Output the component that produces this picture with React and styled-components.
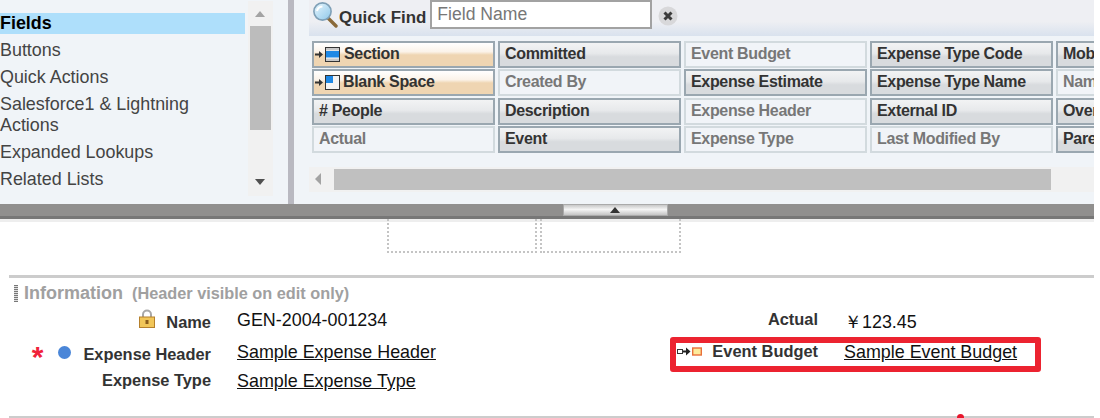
import React from "react";
import styled, { createGlobalStyle } from "styled-components";

const GlobalStyle = createGlobalStyle`
  html, body {
    margin: 0;
    padding: 0;
    background: #fff;
  }
  body {
    width: 1100px;
    height: 418px;
    overflow: hidden;
    font-family: "Liberation Sans", Arial, sans-serif;
  }
`;

const FIELDS = [
  { label: "Section", tone: "tool", icon: "section" },
  { label: "Committed" },
  { label: "Event Budget", used: true },
  { label: "Expense Type Code" },
  { label: "Mobile" },
  { label: "Blank Space", tone: "tool", icon: "blank" },
  { label: "Created By", used: true },
  { label: "Expense Estimate" },
  { label: "Expense Type Name" },
  { label: "Name", used: true },
  { label: "# People" },
  { label: "Description" },
  { label: "Expense Header", used: true },
  { label: "External ID" },
  { label: "Overdue" },
  { label: "Actual", used: true },
  { label: "Event" },
  { label: "Expense Type", used: true },
  { label: "Last Modified By", used: true },
  { label: "Parent" },
];

function MagnifierIcon() {
  return (
    <MagnifierSvg width="25" height="26" viewBox="0 0 25 26">
      <defs>
        <linearGradient id="lens" x1="0" y1="0" x2="1" y2="1">
          <stop offset="0" stopColor="#e8f6fd" />
          <stop offset="1" stopColor="#8ec8ea" />
        </linearGradient>
      </defs>
      <path d="M15 16l8 8" stroke="#8a6a3a" strokeWidth="3.4" strokeLinecap="round" />
      <circle cx="9.5" cy="9.5" r="8.6" fill="url(#lens)" stroke="#7e9fb6" strokeWidth="1.6" />
      <path d="M4 9c.6-2.8 2.6-4.4 5.4-4.6" stroke="#fff" strokeWidth="2" fill="none" />
    </MagnifierSvg>
  );
}

function ClearIcon() {
  return (
    <ClearSvg width="20" height="20" viewBox="0 0 20 20">
      <circle cx="10" cy="10" r="9.5" fill="#d8d8da" />
      <path d="M6.5 6.5l7 7M13.5 6.5l-7 7" stroke="#3c3c3c" strokeWidth="3" />
    </ClearSvg>
  );
}

function ToolArrow() {
  return (
    <svg width="9" height="9" viewBox="0 0 9 9">
      <path d="M0 3.5h4V1l4 3.5L4 8V5.5H0z" fill="#333" />
    </svg>
  );
}

function SectionIcon() {
  return (
    <svg width="15" height="15" viewBox="0 0 15 15">
      <rect x="0.5" y="0.5" width="14" height="14" fill="#fff" stroke="#333" />
      <rect x="1" y="1" width="13" height="2.5" fill="#c8c8c8" />
      <rect x="1" y="4" width="13" height="6.5" fill="#1e88e5" />
      <rect x="1" y="11.5" width="13" height="2.5" fill="#c8c8c8" />
    </svg>
  );
}

function BlankIcon() {
  return (
    <svg width="15" height="15" viewBox="0 0 15 15">
      <rect x="0.5" y="0.5" width="14" height="14" fill="#f4f4f4" stroke="#333" />
      <rect x="1" y="1" width="7" height="7" fill="#1e88e5" />
    </svg>
  );
}

function LockIcon() {
  return (
    <svg width="16" height="19" viewBox="0 0 16 19">
      <path d="M4 9V5.5a4 4 0 0 1 8 0V9" fill="none" stroke="#a8a8a8" strokeWidth="2" />
      <rect x="0.5" y="8" width="15" height="10.5" fill="#f1c659" stroke="#b5802c" />
      <rect x="6.5" y="11" width="3" height="4" fill="#8a5c1a" />
    </svg>
  );
}

function FieldMoveIcon() {
  return (
    <svg width="25" height="9" viewBox="0 0 25 9">
      <rect x="0.5" y="2.5" width="5" height="4" fill="#fff" stroke="#333" />
      <path d="M6 3.6h3V0.5l4.5 4-4.5 4V5.4H6z" fill="#222" />
      <rect x="15.7" y="1" width="8.6" height="7" fill="#fdeb9c" stroke="#e8703a" strokeWidth="1.4" />
    </svg>
  );
}

function App() {
  return (
    <>
      <GlobalStyle />
      <Page>
        <Palette>
          <ListPanel>
            <SideList>
              <SideItem $active>Fields</SideItem>
              <SideItem>Buttons</SideItem>
              <SideItem>Quick Actions</SideItem>
              <SideItem>Salesforce1 &amp; Lightning Actions</SideItem>
              <SideItem>Expanded Lookups</SideItem>
              <SideItem>Related Lists</SideItem>
            </SideList>
            <VScroll>
              <ScrollArrow $dir="up" />
              <VThumb />
              <ScrollArrow $dir="down" />
            </VScroll>
          </ListPanel>
          <PanelDivider />
          <FieldsPanel>
            <QuickFind>
              <MagnifierIcon />
              <QuickLabel>Quick Find</QuickLabel>
              <QuickInput placeholder="Field Name" readOnly />
              <ClearIcon />
            </QuickFind>
            <FieldGrid>
              {FIELDS.map((f) => (
                <FieldChip key={f.label} $tone={f.tone} $used={f.used}>
                  {f.icon && (
                    <ChipIcons $blank={f.icon === "blank"}>
                      <ToolArrow />
                      {f.icon === "section" ? <SectionIcon /> : <BlankIcon />}
                    </ChipIcons>
                  )}
                  {f.label}
                </FieldChip>
              ))}
            </FieldGrid>
            <HScroll>
              <ScrollArrow $dir="left" />
              <HThumb />
            </HScroll>
          </FieldsPanel>
        </Palette>
        <Splitter>
          <SplitHandle />
        </Splitter>
        <Canvas>
          <DropRow>
            <DropBox $width={150} />
            <DropBox $width={141} />
          </DropRow>
          <Section>
            <SectionHead>
              <Grip />
              <SectionTitle>Information</SectionTitle>
              <SectionNote>(Header visible on edit only)</SectionNote>
            </SectionHead>
            <Columns>
              <FormColumn $width={460}>
                <FormRow $height={32} $label={202}>
                  <FormLabel $top={5}>
                    <LockSlot><LockIcon /></LockSlot>
                    Name
                  </FormLabel>
                  <FormValue $top={3}>GEN-2004-001234</FormValue>
                </FormRow>
                <FormRow $height={29} $label={202}>
                  <FormLabel $top={5}>
                    <Required>*</Required>
                    <BlueDot />
                    Expense Header
                  </FormLabel>
                  <FormLink $top={3}>Sample Expense Header</FormLink>
                </FormRow>
                <FormRow $height={29} $label={202}>
                  <FormLabel $top={2}>Expense Type</FormLabel>
                  <FormLink $top={3}>Sample Expense Type</FormLink>
                </FormRow>
              </FormColumn>
              <FormColumn $width={616}>
                <FormRow $height={32} $label={349}>
                  <FormLabel $top={2}>Actual</FormLabel>
                  <FormValue $top={5}>￥123.45</FormValue>
                </FormRow>
                <FormRow $height={29} $label={349}>
                  <Highlight />
                  <FormLabel $top={2}>
                    <MoveSlot><FieldMoveIcon /></MoveSlot>
                    Event Budget
                  </FormLabel>
                  <FormLink $top={3}>Sample Event Budget</FormLink>
                </FormRow>
              </FormColumn>
            </Columns>
          </Section>
          <SectionRule>
            <StrayDot />
          </SectionRule>
        </Canvas>
      </Page>
    </>
  );
}

export default App;

const Page = styled.div`
  width: 1100px;
  height: 418px;
  overflow: hidden;
  color: #333;
`;

const Palette = styled.div`
  display: flex;
  height: 204px;
  width: 1094px;
  background: #f0f4f8;
`;

const ListPanel = styled.div`
  display: flex;
  width: 288px;
  flex-shrink: 0;
`;

const SideList = styled.ul`
  list-style: none;
  width: 245px;
  margin: 0 3px 0 0;
  padding: 13px 0 0;
  font-size: 17.9px;
  line-height: 21px;
  color: #444;
`;

const SideItem = styled.li`
  margin-bottom: 6px;
  font-weight: ${(p) => (p.$active ? 700 : 400)};
  color: ${(p) => (p.$active ? "#000" : "#444")};
  background: ${(p) => (p.$active ? "#aedffb" : "transparent")};
`;

const VScroll = styled.div`
  position: relative;
  display: flex;
  flex-direction: column;
  align-items: center;
  width: 25px;
  height: 195px;
  margin-top: 1px;
  background: #f1f1f1;
`;

const VThumb = styled.div`
  width: 21px;
  height: 104px;
  margin-top: 25px;
  background: #bcbcbc;
`;

const ScrollArrow = styled.span`
  position: absolute;
  width: 0;
  height: 0;
  ${(p) =>
    p.$dir === "up" &&
    `top: 10px; left: 7px; border: 5.5px solid transparent; border-top: 0; border-bottom: 6px solid #a3a3a3;`}
  ${(p) =>
    p.$dir === "down" &&
    `bottom: 11px; left: 7px; border: 5.5px solid transparent; border-bottom: 0; border-top: 6px solid #505050;`}
  ${(p) =>
    p.$dir === "left" &&
    `left: 6px; top: 6px; border: 6px solid transparent; border-left: 0; border-right: 6px solid #a3a3a3;`}
`;

const PanelDivider = styled.div`
  width: 6px;
  flex-shrink: 0;
  background: #b9b9c1;
`;

const FieldsPanel = styled.div`
  flex: 1;
  min-width: 0;
  padding-left: 15px;
  overflow: hidden;
`;

const QuickFind = styled.div`
  display: flex;
  align-items: center;
  height: 36px;
  padding-left: 4px;
  background: linear-gradient(#eeeff3 0, #eeeff3 60%, #d9e2ee 100%);
`;

const MagnifierSvg = styled.svg`
  flex-shrink: 0;
  margin: -6px 1px 0 0;
`;

const ClearSvg = styled.svg`
  margin: -5px 0 0 6px;
`;

const QuickLabel = styled.span`
  margin: 0 4px 0 0;
  font-size: 16.9px;
  font-weight: 700;
  color: #333;
`;

const QuickInput = styled.input`
  box-sizing: border-box;
  width: 222px;
  height: 29px;
  margin-bottom: 7px;
  padding: 0 5px;
  border: 2px solid #a2a2a2;
  background: #fff;
  font-family: inherit;
  font-size: 17.6px;
  outline: none;
  &::placeholder {
    color: #777;
    opacity: 1;
  }
`;

const FieldGrid = styled.div`
  display: grid;
  grid-template-columns: repeat(5, 183px);
  grid-auto-rows: 27px;
  column-gap: 3px;
  row-gap: 1.33px;
  margin: 5px 0 0 3px;
`;

const FieldChip = styled.div`
  box-sizing: border-box;
  display: flex;
  align-items: center;
  padding: 0 0 1px ${(p) => (p.$tone === "tool" ? "1px" : "5px")};
  border: 2px solid ${(p) => (p.$used ? "#d2dade" : "#9aa7b0")};
  white-space: nowrap;
  overflow: hidden;
  font-size: 16px;
  letter-spacing: -0.33px;
  font-weight: 700;
  color: ${(p) => (p.$used ? "#777" : "#333")};
  background: ${(p) => {
    if (p.$used) return "#f1f4f8";
    if (p.$tone === "tool") return "linear-gradient(#fff 0, #fbf3e9 38%, #efd5b2 52%, #efd5b2 100%)";
    return "linear-gradient(#f2f3f4 0, #e7e9eb 45%, #d8dbde 60%, #d8dbde 100%)";
  }};
`;

const ChipIcons = styled.span`
  display: inline-flex;
  align-items: center;
  gap: 1px;
  margin-right: ${(p) => (p.$blank ? "3px" : "4px")};
`;

const HScroll = styled.div`
  position: relative;
  display: flex;
  box-sizing: border-box;
  height: 25px;
  margin-top: 14px;
  padding: 2px 0 2px 25px;
  background: #f1f1f1;
`;

const HThumb = styled.div`
  width: 717px;
  background: #c0c0c0;
`;

const Splitter = styled.div`
  display: flex;
  justify-content: center;
  box-sizing: border-box;
  width: 1094px;
  height: 18px;
  padding-left: 137px;
  background: #908f8e;
  border-bottom: 3px solid #eee;
  box-shadow: inset 0 -3px 0 #777;
`;

const SplitHandle = styled.div`
  position: relative;
  box-sizing: border-box;
  width: 105px;
  height: 12px;
  background: linear-gradient(#c8c8c8, #f4f4f4 45%, #c4c4c4);
  border: 1px solid #aaa;
  &::after {
    content: "";
    position: absolute;
    left: 46px;
    top: 2px;
    border: 5.5px solid transparent;
    border-top: 0;
    border-bottom: 6px solid #333;
  }
`;

const Canvas = styled.div`
  box-sizing: border-box;
  width: 1094px;
  padding-left: 9px;
`;

const DropRow = styled.div`
  display: flex;
  align-items: flex-start;
  gap: 3px;
  height: 56px;
  margin-top: -3px;
  padding-left: 378px;
`;

const DropBox = styled.div`
  box-sizing: border-box;
  width: ${(p) => p.$width}px;
  height: 34px;
  border: 2px dotted #c4c4c4;
  border-top: 0;
`;

const Section = styled.section`
  box-sizing: border-box;
  height: 141px;
  border-top: 3px solid #ccc;
`;

const SectionHead = styled.div`
  box-sizing: border-box;
  display: flex;
  align-items: center;
  height: 29px;
  padding: 1px 0 0 5px;
`;

const Grip = styled.span`
  width: 4px;
  height: 17px;
  margin-right: 6px;
  background: repeating-linear-gradient(#777 0 1px, #ddd 1px 2px);
`;

const SectionTitle = styled.span`
  margin-right: 9px;
  font-size: 18px;
  font-weight: 700;
  color: #a0a0a0;
`;

const SectionNote = styled.span`
  font-size: 16.3px;
  font-weight: 700;
  color: #a0a0a0;
`;

const Columns = styled.div`
  display: flex;
`;

const FormColumn = styled.div`
  display: flex;
  flex-direction: column;
  flex-shrink: 0;
  width: ${(p) => p.$width}px;
`;

const FormRow = styled.div`
  position: relative;
  display: grid;
  grid-template-columns: ${(p) => p.$label}px 1fr;
  column-gap: 26px;
  align-items: start;
  height: ${(p) => p.$height}px;
`;

const FormLabel = styled.div`
  display: flex;
  justify-content: flex-end;
  align-items: center;
  height: 20px;
  margin-top: ${(p) => p.$top}px;
  white-space: nowrap;
  font-size: 16.4px;
  font-weight: 700;
  color: #333;
`;

const LockSlot = styled.span`
  display: inline-flex;
  margin: -7px 11px 0 0;
`;

const MoveSlot = styled.span`
  display: inline-flex;
  margin-right: 10px;
`;

const Required = styled.span`
  height: 14px;
  margin-right: 15px;
  font-size: 30px;
  line-height: 20px;
  color: #f0223a;
`;

const BlueDot = styled.span`
  width: 13px;
  height: 13px;
  margin: -4px 12px 0 0;
  border-radius: 50%;
  background: #4a86d8;
`;

const FormValue = styled.div`
  height: 20px;
  margin-top: ${(p) => p.$top}px;
  font-size: 17.9px;
  line-height: 20px;
  color: #111;
  white-space: nowrap;
`;

const FormLink = styled(FormValue)`
  text-decoration: underline;
`;

const Highlight = styled.div`
  position: absolute;
  left: 201px;
  top: -2px;
  box-sizing: border-box;
  width: 371px;
  height: 35px;
  border: 6px solid #ec2330;
  border-radius: 3px;
`;

const SectionRule = styled.div`
  position: relative;
  height: 2px;
  background: #ccc;
`;

const StrayDot = styled.span`
  position: absolute;
  left: 948px;
  top: -2px;
  width: 7px;
  height: 7px;
  border-radius: 50%;
  background: #e8162c;
`;
